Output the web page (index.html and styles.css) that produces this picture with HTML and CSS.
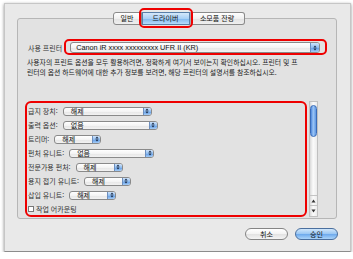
FILE: index.html
```html
<!DOCTYPE html>
<html lang="ko">
<head>
<meta charset="utf-8">
<link rel="stylesheet" href="styles.css">
</head>
<body>
<div class="window">
  <div class="tabs">
    <span class="tab first">일반</span>
    <span class="tab active hl">드라이버</span>
    <span class="tab last">소모품 잔량</span>
  </div>
  <div class="panel">
    <div class="printer-row">
      <span class="plabel">사용 프린터</span>
      <div class="popup big hl2">
        <span class="ptext">Canon iR xxxx xxxxxxxxx UFR II (KR)</span>
        <span class="arrows"><svg width="5" height="7" viewBox="0 0 5 7"><path d="M2.5 0.5 L4.5 3 H0.5 Z M2.5 6.5 L4.5 4 H0.5 Z" fill="#1a2a44"/></svg></span>
      </div>
    </div>
    <p class="desc">사용자의 프린트 옵션을 모두 활용하려면, 정확하게 여기서 보이는지 확인하십시오. 프린터 및 프<br>린터의 옵션 하드웨어에 대한 추가 정보를 보려면, 해당 프린터의 설명서를 참조하십시오.</p>
    <div class="scroll">
      <div class="list">
        <div class="row"><span class="rl">급지 장치:</span><span class="popup w89"><span class="ptext">해제</span><span class="arrows"><svg width="5" height="7" viewBox="0 0 5 7"><path d="M2.5 0.5 L4.5 3 H0.5 Z M2.5 6.5 L4.5 4 H0.5 Z" fill="#1a2a44"/></svg></span></span></div>
        <div class="row"><span class="rl">출력 옵션:</span><span class="popup w95"><span class="ptext">없음</span><span class="arrows"><svg width="5" height="7" viewBox="0 0 5 7"><path d="M2.5 0.5 L4.5 3 H0.5 Z M2.5 6.5 L4.5 4 H0.5 Z" fill="#1a2a44"/></svg></span></span></div>
        <div class="row"><span class="rl">트리머:</span><span class="popup w47"><span class="ptext">해제</span><span class="arrows"><svg width="5" height="7" viewBox="0 0 5 7"><path d="M2.5 0.5 L4.5 3 H0.5 Z M2.5 6.5 L4.5 4 H0.5 Z" fill="#1a2a44"/></svg></span></span></div>
        <div class="row"><span class="rl">펀처 유니트:</span><span class="popup w85"><span class="ptext">없음</span><span class="arrows"><svg width="5" height="7" viewBox="0 0 5 7"><path d="M2.5 0.5 L4.5 3 H0.5 Z M2.5 6.5 L4.5 4 H0.5 Z" fill="#1a2a44"/></svg></span></span></div>
        <div class="row"><span class="rl">전문가용 펀처:</span><span class="popup w47"><span class="ptext">해제</span><span class="arrows"><svg width="5" height="7" viewBox="0 0 5 7"><path d="M2.5 0.5 L4.5 3 H0.5 Z M2.5 6.5 L4.5 4 H0.5 Z" fill="#1a2a44"/></svg></span></span></div>
        <div class="row"><span class="rl">용지 접기 유니트:</span><span class="popup w47"><span class="ptext">해제</span><span class="arrows"><svg width="5" height="7" viewBox="0 0 5 7"><path d="M2.5 0.5 L4.5 3 H0.5 Z M2.5 6.5 L4.5 4 H0.5 Z" fill="#1a2a44"/></svg></span></span></div>
        <div class="row"><span class="rl">삽입 유니트:</span><span class="popup w47"><span class="ptext">해제</span><span class="arrows"><svg width="5" height="7" viewBox="0 0 5 7"><path d="M2.5 0.5 L4.5 3 H0.5 Z M2.5 6.5 L4.5 4 H0.5 Z" fill="#1a2a44"/></svg></span></span></div>
        <div class="row chk"><span class="check"></span><span class="rl">작업 어카운팅</span></div>
      </div>
      <div class="scrollbar">
        <div class="thumb"></div>
        <div class="sb-arrows">
          <span class="sb-btn"><svg width="5" height="4" viewBox="0 0 5 4"><path d="M2.5 0.5 L4.5 3.5 H0.5 Z" fill="#333"/></svg></span>
          <span class="sb-btn"><svg width="5" height="4" viewBox="0 0 5 4"><path d="M2.5 3.5 L4.5 0.5 H0.5 Z" fill="#333"/></svg></span>
        </div>
      </div>
    </div>
  </div>
  <div class="buttons">
    <span class="btn">취소</span>
    <span class="btn primary">승인</span>
  </div>
</div>
</body>
</html>
```

FILE: styles.css
```css
body {
  margin: 0;
  background: #fff;
  font-family: "Noto Sans CJK KR", "Noto Sans", sans-serif;
  color: #222;
}

.window {
  margin: 3px 0 0 4px;
  width: 347px;
  height: 249px;
  box-sizing: border-box;
  border: 1px solid #c6c6c6;
  border-bottom-color: #8c8c8c;
  background: #e9e9e9;
  box-shadow: 0 1px 3px rgba(0, 0, 0, 0.45);
  display: flex;
  flex-direction: column;
}

.tabs {
  display: flex;
  justify-content: center;
  margin: 8px 0 0 2px;
  position: relative;
  z-index: 1;
  height: 13px;
}

.tab {
  height: 13px;
  box-sizing: border-box;
  border: 1px solid #8a8a8a;
  border-left: 1px solid #a8a8a8;
  background: linear-gradient(#ffffff, #f0f0f0 50%, #e2e2e2 51%, #efefef);
  font-size: 7px;
  line-height: 11px;
  text-align: center;
  color: #111;
}

.tab.first {
  width: 29px;
  border-left-color: #8a8a8a;
  border-radius: 3px 0 0 3px;
}

.tab.active {
  width: 48px;
  position: relative;
  background: linear-gradient(#d4e8fb, #a9d0f5 50%, #7fb7ee 51%, #b6dbfb);
  border-color: #5a7fa8;
}

.tab.last {
  width: 55px;
  border-radius: 0 3px 3px 0;
}

.hl::after {
  content: "";
  position: absolute;
  left: -4px;
  right: -4px;
  top: -5px;
  bottom: -4px;
  border: 2px solid #ee0000;
  border-radius: 5px;
}

.panel {
  margin: -7px 0 0 12px;
  width: 320px;
  height: 201px;
  box-sizing: border-box;
  border: 1px solid #b6b6b6;
  border-radius: 3px;
  background: #e2e2e2;
  padding: 23px 0 0 10px;
  display: flex;
  flex-direction: column;
}

.printer-row {
  display: flex;
  align-items: center;
  height: 11px;
}

.plabel {
  font-size: 7px;
  color: #333;
  margin-right: 8px;
  white-space: nowrap;
}

.popup {
  display: flex;
  align-items: stretch;
  box-sizing: border-box;
  height: 9px;
  border: 1px solid #8a8a8a;
  border-radius: 3px;
  background: linear-gradient(#ffffff, #f4f4f4 50%, #e6e6e6 51%, #f2f2f2);
  position: relative;
}

.popup.big {
  width: 250px;
  height: 11px;
}

.hl2::after {
  content: "";
  position: absolute;
  left: -7px;
  right: -8px;
  top: -4px;
  bottom: -3px;
  border: 2px solid #ee0000;
  border-radius: 5px;
}

.ptext {
  flex: 1;
  font-size: 7px;
  line-height: 7px;
  padding-left: 7px;
  white-space: nowrap;
  color: #111;
}

.popup.big .ptext {
  font-family: "Liberation Sans", "DejaVu Sans", sans-serif;
  font-size: 7.3px;
  line-height: 9px;
  padding-left: 5px;
}

.arrows {
  width: 7px;
  display: flex;
  align-items: center;
  justify-content: center;
  border-left: 1px solid #6d8fbf;
  border-radius: 0 2px 2px 0;
  background: linear-gradient(#cfe3fa, #8fbdf0 50%, #5f9ae4 51%, #a6cdf6);
}

.popup.big .arrows {
  width: 8px;
}

.arrows svg {
  width: 4px;
  height: 6px;
}

.w89 { width: 89px; }
.w95 { width: 95px; }
.w85 { width: 85px; }
.w47 { width: 47px; }

.desc {
  margin: 4px 0 0 -1px;
  font-size: 6.85px;
  line-height: 10px;
  white-space: nowrap;
  color: #222;
}

.scroll {
  margin: 24px 0 0 -3px;
  height: 116px;
  display: flex;
  gap: 2px;
}

.list {
  width: 282px;
  position: relative;
  padding-top: 3px;
  box-sizing: border-box;
}

.list::after {
  content: "";
  position: absolute;
  inset: 0;
  border: 2px solid #ee0000;
  border-radius: 6px;
}

.row {
  height: 14px;
  display: flex;
  align-items: center;
  padding-left: 3px;
  gap: 5px;
}

.row.chk {
  gap: 2px;
}

.rl {
  font-size: 7px;
  color: #333;
  white-space: nowrap;
}

.check {
  width: 6px;
  height: 6px;
  box-sizing: border-box;
  border: 1px solid #777;
  background: #fff;
}

.scrollbar {
  width: 9px;
  height: 116px;
  box-sizing: border-box;
  border: 1px solid #c0c0c0;
  background: linear-gradient(to right, #dadada, #fbfbfb 45%, #ececec);
  display: flex;
  flex-direction: column;
  align-items: center;
}

.thumb {
  margin-top: 3px;
  width: 7px;
  height: 32px;
  box-sizing: border-box;
  border: 1px solid #3a6cb8;
  border-radius: 4px;
  background: linear-gradient(to right, #4d86db, #9cc6f6 45%, #5f97e2);
}

.sb-arrows {
  margin-top: auto;
  margin-bottom: 1px;
  display: flex;
  flex-direction: column;
  width: 100%;
}

.sb-btn {
  height: 9px;
  border-top: 1px solid #c4c4c4;
  display: flex;
  align-items: center;
  justify-content: center;
}

.buttons {
  display: flex;
  justify-content: flex-end;
  gap: 7px;
  margin-top: 9px;
  padding-right: 12px;
}

.btn {
  width: 43px;
  height: 12px;
  box-sizing: border-box;
  border: 1px solid #858585;
  border-radius: 6px;
  background: linear-gradient(#ffffff, #f3f3f3 50%, #e2e2e2 51%, #f4f4f4);
  font-size: 7px;
  line-height: 10px;
  text-align: center;
  color: #111;
}

.btn.primary {
  border-color: #4a6f9e;
  background: linear-gradient(#d0e6fb, #98c6f3 50%, #6ba8ec 51%, #abd4fa);
}
```
